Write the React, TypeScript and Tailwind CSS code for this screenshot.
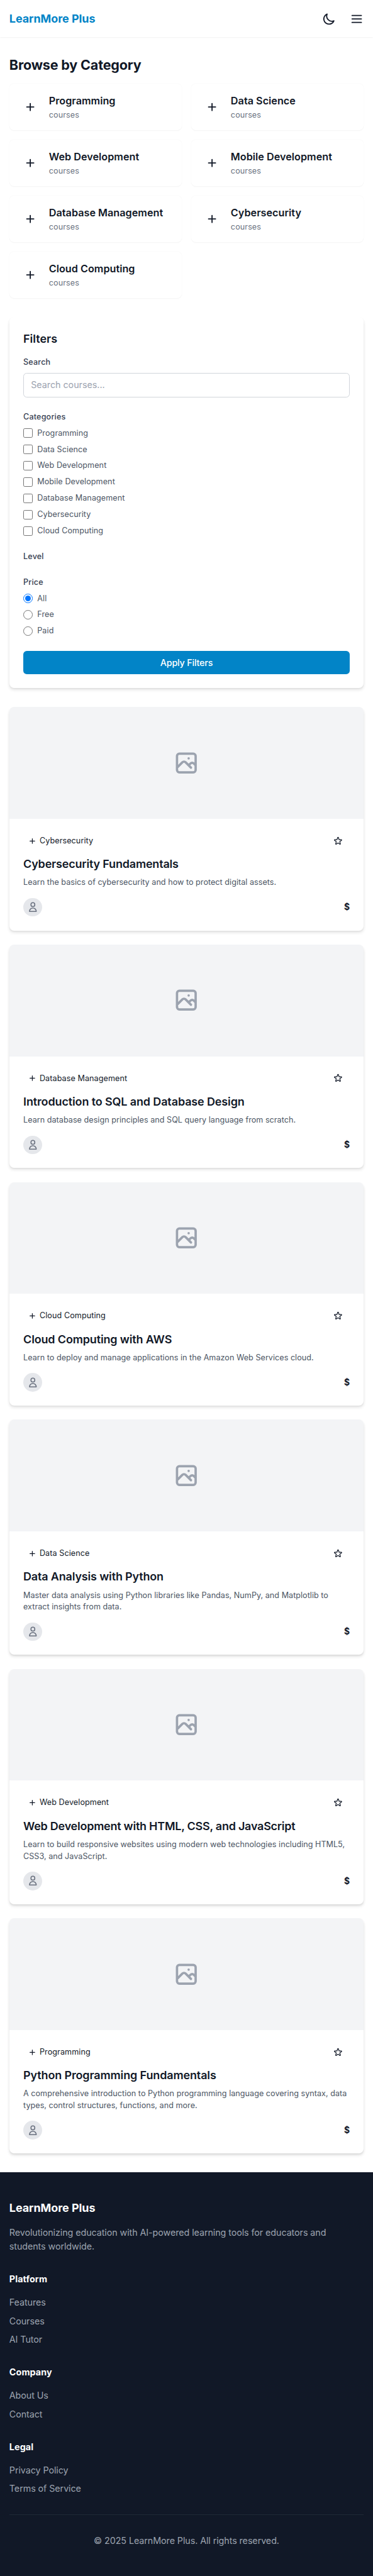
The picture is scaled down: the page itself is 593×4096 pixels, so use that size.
const cats = ['Programming', 'Data Science', 'Web Development', 'Mobile Development', 'Database Management', 'Cybersecurity', 'Cloud Computing'];

const courses = [
  { cat: 'Cybersecurity', title: 'Cybersecurity Fundamentals', tracking: 'tracking-[-0.18px]', text: 'Learn the basics of cybersecurity and how to protect digital assets.' },
  { cat: 'Database Management', title: 'Introduction to SQL and Database Design', tracking: 'tracking-[-0.12px]', text: 'Learn database design principles and SQL query language from scratch.' },
  { cat: 'Cloud Computing', title: 'Cloud Computing with AWS', tracking: 'tracking-[-0.14px]', text: 'Learn to deploy and manage applications in the Amazon Web Services cloud.' },
  { cat: 'Data Science', title: 'Data Analysis with Python', tracking: 'tracking-[-0.16px]', text: 'Master data analysis using Python libraries like Pandas, NumPy, and Matplotlib to extract insights from data.' },
  { cat: 'Web Development', title: 'Web Development with HTML, CSS, and JavaScript', tracking: 'tracking-[-0.25px]', text: 'Learn to build responsive websites using modern web technologies including HTML5, CSS3, and JavaScript.' },
  { cat: 'Programming', title: 'Python Programming Fundamentals', tracking: 'tracking-[-0.125px]', text: 'A comprehensive introduction to Python programming language covering syntax, data types, control structures, functions, and more.' },
];

const footerGroups = [
  { title: 'Platform', links: ['Features', 'Courses', 'AI Tutor'] },
  { title: 'Company', links: ['About Us', 'Contact'] },
  { title: 'Legal', links: ['Privacy Policy', 'Terms of Service'] },
];

function Stroke({ d, className }: { d: string; className: string }) {
  return (
    <svg viewBox="0 0 24 24" fill="none" stroke="currentColor" strokeWidth={2} strokeLinecap="round" strokeLinejoin="round" className={className}>
      <path d={d} />
    </svg>
  );
}

const plus = 'M12 6v6m0 0v6m0-6h6m-6 0H6';
const person = 'M16 7a4 4 0 11-8 0 4 4 0 018 0zM12 14a7 7 0 00-7 7h14a7 7 0 00-7-7z';
const picture = 'M4 16l4.586-4.586a2 2 0 012.828 0L16 16m-2-2l1.586-1.586a2 2 0 012.828 0L20 14m-6-6h.01M6 20h12a2 2 0 002-2V6a2 2 0 00-2-2H6a2 2 0 00-2 2v12a2 2 0 002 2z';
const star = 'M11.049 2.927c.3-.921 1.603-.921 1.902 0l1.519 4.674a1 1 0 00.95.69h4.915c.969 0 1.371 1.24.588 1.81l-3.976 2.888a1 1 0 00-.363 1.118l1.518 4.674c.3.922-.755 1.688-1.538 1.118l-3.976-2.888a1 1 0 00-1.176 0l-3.976 2.888c-.783.57-1.838-.197-1.538-1.118l1.518-4.674a1 1 0 00-.363-1.118l-3.976-2.888c-.784-.57-.38-1.81.588-1.81h4.914a1 1 0 00.951-.69l1.519-4.674z';
const moon = 'M20.354 15.354A9 9 0 018.646 3.646 9.003 9.003 0 0012 21a9.003 9.003 0 008.354-5.646z';
const menu = 'M4 6h16M4 12h16M4 18h16';

const labelText = 'text-[13.6px] leading-5 font-medium tracking-[0.19px] text-[#374151]';
const optionText = 'text-[13.6px] leading-5 tracking-[0.09px] text-[#4b5563]';

export default function App() {
  return (
    <div className="flex h-[4423.2px] flex-col overflow-hidden bg-white font-['Inter',sans-serif] text-[#111827] antialiased [zoom:0.9261]">
      <header className="flex h-16 shrink-0 items-center justify-between px-4 shadow-xs">
        <span className="text-[19.4px] leading-7 font-bold tracking-[-0.06px] text-[#0284c7]">LearnMore Plus</span>
        <div className="flex items-center gap-4">
          <button className="p-2"><Stroke d={moon} className="size-6" /></button>
          <button><Stroke d={menu} className="size-6" /></button>
        </div>
      </header>

      <main className="flex shrink-0 flex-col gap-8 px-4 py-8">
        <section>
          <h2 className="mb-4 text-[23.3px] leading-8 font-bold tracking-[-0.2px]">Browse by Category</h2>
          <div className="grid grid-cols-2 gap-4">
            {cats.map((c) => (
              <div key={c} className="flex h-20 items-center gap-3 rounded-lg bg-white px-4 shadow-xs">
                <span className="p-2"><Stroke d={plus} className="size-6" /></span>
                <div>
                  <h3 className="text-[17.5px] leading-7 font-semibold tracking-[0.02px]">{c}</h3>
                  <p className="text-[13.6px] leading-5 tracking-[0.1px] text-[#6b7280]">courses</p>
                </div>
              </div>
            ))}
          </div>
        </section>

        <section className="rounded-lg bg-white p-6 shadow-md">
          <h3 className="mb-4 text-[19.4px] leading-7 font-semibold">Filters</h3>
          <div className={`mb-2 ${labelText}`}>Search</div>
          <div className="mb-6 flex h-[42px] items-center rounded-md border border-[#d1d5db] px-3 text-[15.5px] tracking-[-0.05px] text-[#9ca3af]">Search courses...</div>
          <h4 className={`mb-2 ${labelText}`}>Categories</h4>
          <div className="mb-6 flex flex-col gap-2">
            {cats.map((c) => (
              <label key={c} className={`flex items-center gap-2 ${optionText}`}>
                <span className="size-4 rounded-[2.5px] border border-[#767676] bg-white" />
                {c}
              </label>
            ))}
          </div>
          <h4 className={`mb-6 ${labelText}`}>Level</h4>
          <h4 className={`mb-2 ${labelText}`}>Price</h4>
          <div className="mb-6 flex flex-col gap-2">
            {['All', 'Free', 'Paid'].map((p, i) => (
              <label key={p} className={`flex items-center gap-2 ${optionText}`}>
                {i === 0 ? (
                  <span className="flex size-4 items-center justify-center rounded-full border border-[#0075ff]">
                    <span className="size-2.5 rounded-full bg-[#0075ff]" />
                  </span>
                ) : (
                  <span className="size-4 rounded-full border border-[#767676]" />
                )}
                {p}
              </label>
            ))}
          </div>
          <button className="block h-10 w-full rounded-md bg-[#0284c7] text-[15.5px] leading-6 font-medium tracking-[-0.22px] text-white">Apply Filters</button>
        </section>

        <section className="flex flex-col gap-6">
          {courses.map((c) => (
            <article key={c.title} className="overflow-hidden rounded-lg bg-white shadow-md">
              <div className="flex h-48 items-center justify-center bg-[#f3f4f6] text-[#9ca3af]">
                <Stroke d={picture} className="size-12" />
              </div>
              <div className="p-6">
                <div className="mb-3 flex h-7 items-center justify-between pr-3 pl-2 text-[13.6px] leading-5 tracking-[0.09px]">
                  <span className="flex items-center gap-1"><Stroke d={plus} className="size-4" />{c.cat}</span>
                  <Stroke d={star} className="size-4" />
                </div>
                <h3 className={`mb-2 text-[19.4px] leading-7 font-semibold ${c.tracking}`}>{c.title}</h3>
                <p className="mb-4 text-[13.6px] leading-5 tracking-[0.04px] text-[#4b5563]">{c.text}</p>
                <div className="flex items-center justify-between">
                  <span className="flex size-8 items-center justify-center rounded-full bg-[#e5e7eb] text-[#6b7280]"><Stroke d={person} className="size-5" /></span>
                  <span className="text-[15px] leading-6 font-bold">$</span>
                </div>
              </div>
            </article>
          ))}
        </section>
      </main>

      <footer className="grow bg-[#111827] px-4 pt-12 text-[15.5px] leading-6 tracking-[-0.1px] text-[#9ca3af]">
        <h3 className="mb-4 text-[19.4px] leading-7 font-bold tracking-[-0.06px] text-white">LearnMore Plus</h3>
        <p className="mb-8">Revolutionizing education with AI-powered learning tools for educators and students worldwide.</p>
        <div className="flex flex-col gap-8">
          {footerGroups.map((g) => (
            <div key={g.title}>
              <h4 className="mb-4 font-bold tracking-[0.1px] text-white">{g.title}</h4>
              <ul className="flex flex-col gap-2">{g.links.map((l) => <li key={l}>{l}</li>)}</ul>
            </div>
          ))}
        </div>
        <p className="mt-8 border-t border-[#1f2937] pt-8 text-center">© 2025 LearnMore Plus. All rights reserved.</p>
      </footer>
    </div>
  );
}
